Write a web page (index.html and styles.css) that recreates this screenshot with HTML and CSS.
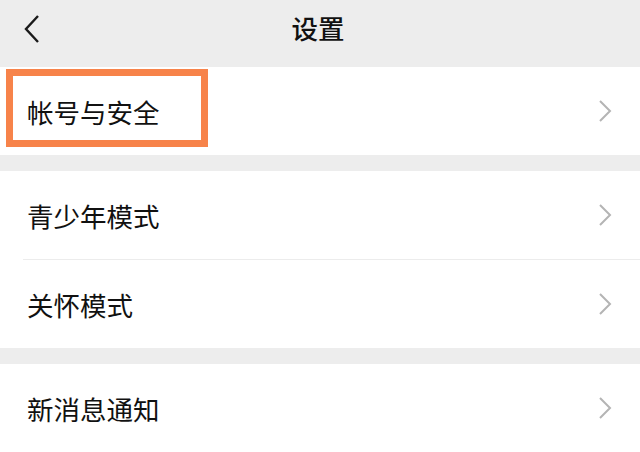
FILE: index.html
```html
<!DOCTYPE html>
<html lang="zh-CN">
<head>
    <meta charset="UTF-8">
    <meta name="viewport" content="width=device-width, initial-scale=1.0">
    <title>设置</title>
    <link rel="stylesheet" href="styles.css">
</head>
<body>
    <div class="header">
        <svg class="back" width="20" height="30" viewBox="0 0 20 30">
            <path d="M15 2 L3 15 L15 28" fill="none" stroke="#1a1a1a" stroke-width="2.4"/>
        </svg>
        <h1>设置</h1>
    </div>

    <div class="group">
        <div class="row">
            <span class="label">帐号与安全</span>
            <svg class="arrow" width="14" height="24" viewBox="0 0 14 24">
                <path d="M2 2 L12 12 L2 22" fill="none" stroke="#b4b4b4" stroke-width="2"/>
            </svg>
            <div class="highlight"></div>
        </div>
    </div>

    <div class="group">
        <div class="row">
            <span class="label">青少年模式</span>
            <svg class="arrow" width="14" height="24" viewBox="0 0 14 24">
                <path d="M2 2 L12 12 L2 22" fill="none" stroke="#b4b4b4" stroke-width="2"/>
            </svg>
        </div>
        <div class="row">
            <span class="label">关怀模式</span>
            <svg class="arrow" width="14" height="24" viewBox="0 0 14 24">
                <path d="M2 2 L12 12 L2 22" fill="none" stroke="#b4b4b4" stroke-width="2"/>
            </svg>
        </div>
    </div>

    <div class="group">
        <div class="row">
            <span class="label">新消息通知</span>
            <svg class="arrow" width="14" height="24" viewBox="0 0 14 24">
                <path d="M2 2 L12 12 L2 22" fill="none" stroke="#b4b4b4" stroke-width="2"/>
            </svg>
        </div>
    </div>
</body>
</html>
```

FILE: styles.css
```css
body{
    margin: 0;
    background: #ededed;
    font-family: "Noto Sans CJK SC", "Noto Sans", sans-serif;
    color: #111;
    display: flex;
    flex-direction: column;
    gap: 16px;
}
.header{
    height: 67px;
    display: flex;
    align-items: center;
    justify-content: center;
    position: relative;
}
.back{
    position: absolute;
    left: 23px;
    top: 14px;
}
h1{
    margin: 0 0 0 -4px;
    font-size: 26.5px;
    font-weight: 500;
    margin-top: -12px;
}
.group{
    background: #fff;
    display: flex;
    flex-direction: column;
}
.header + .group{
    margin-top: -16px;
}
.row{
    height: 88px;
    display: flex;
    align-items: center;
    justify-content: space-between;
    padding: 0 28px 0 27px;
    position: relative;
}
.row + .row{
    border-top: 1px solid #ececec;
    margin-left: 23px;
    padding-left: 4px;
}
.label{
    font-size: 26.5px;
}
.arrow{
    margin-top: -1px;
}
.highlight{
    position: absolute;
    left: 6px;
    top: 2px;
    width: 188px;
    height: 64px;
    border: 7px solid #f7834a;
}
```
